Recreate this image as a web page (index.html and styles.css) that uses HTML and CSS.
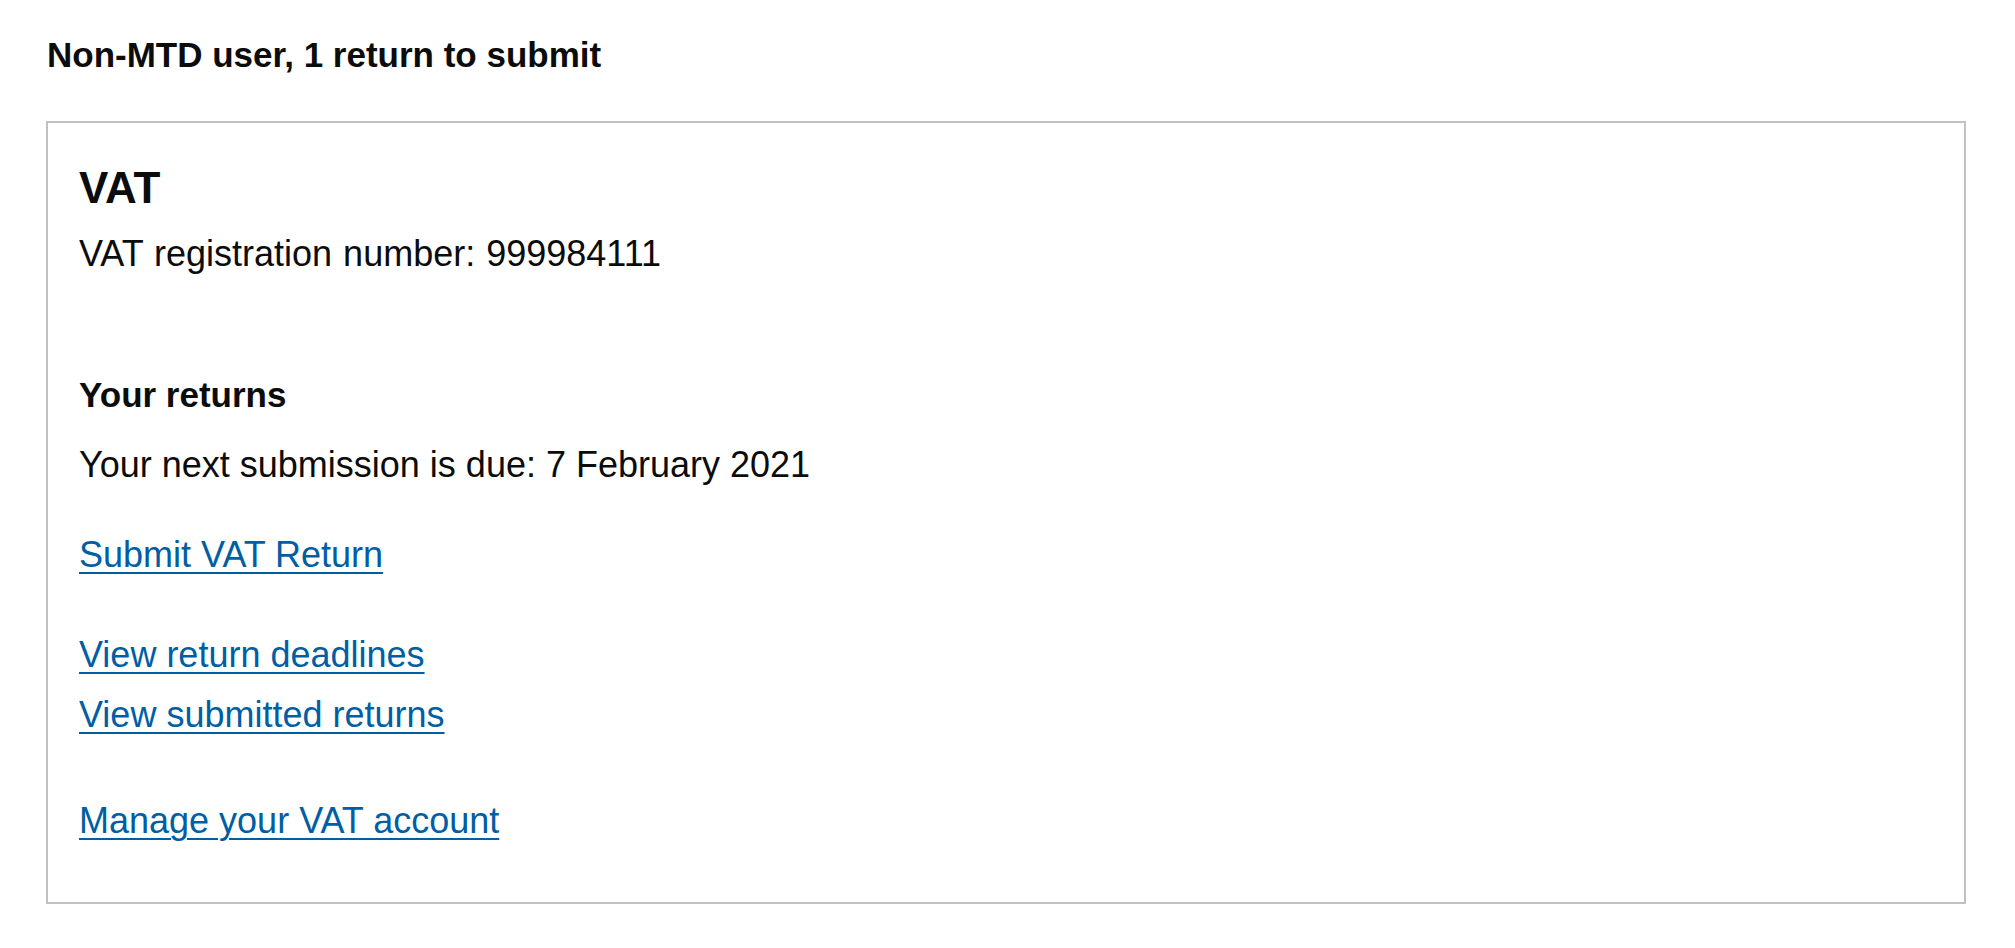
FILE: index.html
```html
<!DOCTYPE html>
<html lang="en">
<head>
<meta charset="utf-8">
<title>VAT account</title>
<link rel="stylesheet" href="styles.css">
</head>
<body>
<main class="page">
  <h1 class="page-heading">Non-MTD user, 1 return to submit</h1>
  <section class="card">
    <h2 class="card-title">VAT</h2>
    <p class="card-meta">VAT registration number: 999984111</p>
    <h3 class="card-subheading">Your returns</h3>
    <p class="card-text due">Your next submission is due: 7 February 2021</p>
    <p class="card-text submit"><a class="link" href="#">Submit VAT Return</a></p>
    <ul class="link-list">
      <li><a class="link" href="#">View return deadlines</a></li>
      <li><a class="link" href="#">View submitted returns</a></li>
    </ul>
    <p class="card-text"><a class="link" href="#">Manage your VAT account</a></p>
  </section>
</main>
</body>
</html>
```
FILE: styles.css
```css
html, body {
  margin: 0;
  padding: 0;
  background: #ffffff;
}

body {
  font-family: "Liberation Sans", Arial, sans-serif;
  color: #0b0c0c;
}

.page {
  padding: 30px 49px 0 46px;
}

.page-heading {
  margin: 0 0 41px 1px;
  font-size: 35px;
  line-height: 50px;
  font-weight: 700;
}

.card {
  border: 2px solid #bfc1c3;
  padding: 35px 30px 56px 31px;
}

.card-title {
  margin: 0 0 11px;
  font-size: 44px;
  line-height: 60px;
  font-weight: 700;
}

.card-meta {
  margin: 0 0 91px;
  font-size: 36px;
  line-height: 50px;
  word-spacing: 1px;
}

.card-subheading {
  margin: 0 0 20px;
  font-size: 35px;
  line-height: 50px;
  font-weight: 700;
}

.card-text {
  margin: 0;
  font-size: 36px;
  line-height: 50px;
}

.due {
  margin-bottom: 40px;
}

.submit {
  margin-bottom: 50px;
}

.link-list {
  list-style: none;
  margin: 0 0 56px;
  padding: 0;
  font-size: 36px;
  line-height: 50px;
}

.link-list li + li {
  margin-top: 10px;
}

.link {
  color: #005ea5;
  text-decoration: underline;
  text-decoration-thickness: 2px;
  text-underline-offset: 5px;
}
```
